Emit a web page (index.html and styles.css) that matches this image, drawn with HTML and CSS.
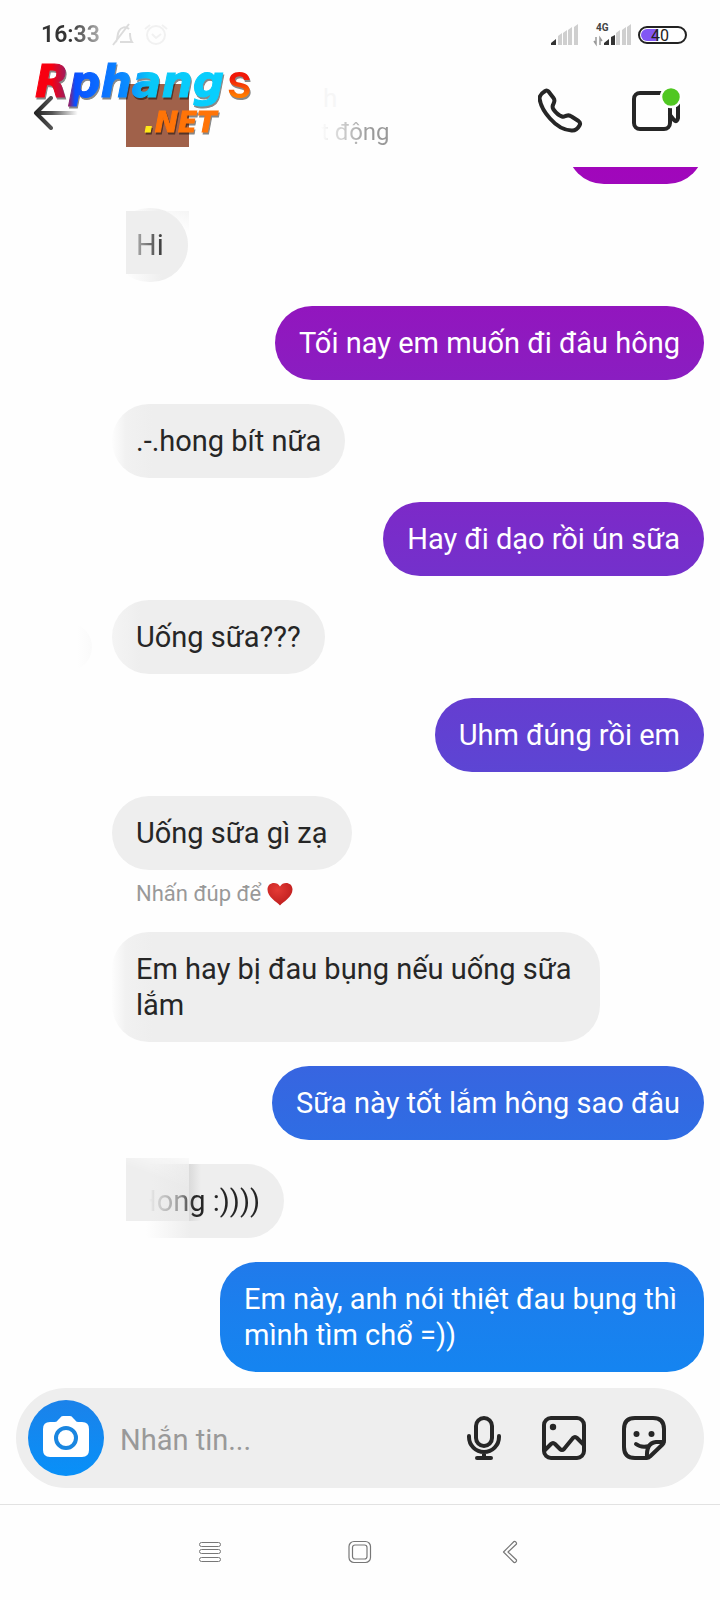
FILE: index.html
```html
<!DOCTYPE html>
<html lang="vi">
<head>
<meta charset="utf-8">
<meta name="viewport" content="width=device-width, initial-scale=1">
<title>Tin nhắn</title>
<link rel="stylesheet" href="styles.css">
</head>
<body>
<div class="app">
  <div class="status">
    <span class="clock">16:33</span>
    <svg class="status-left" width="60" height="24" viewBox="0 0 60 24" fill="none" stroke-width="2">
      <g stroke="#dcdcdc"><path d="M4 19c2-3 1-8 3-11 2-4 7-5 10-2M18 10c0 4 0 6 2 9H8M1 22L17 1"/></g>
      <g stroke="#f1f1f1"><circle cx="44" cy="12" r="9"/><path d="M33 6l5-4M50 2l5 4M40 11l4 4 5-4"/></g>
    </svg>
    <svg class="status-right" width="138" height="24" viewBox="0 0 138 24">
      <g fill="#cfcfcf"><path d="M8 13l4-3v12H8zM13 10l4-3v15h-4zM18 7l4-3v18h-4zM24 4l4-3v21h-4z"/><path d="M66 10l4-3v15h-4zM72 7l4-3v18h-4zM77 4l4-3v21h-4z"/></g>
      <path fill="#333" d="M1 22v-2l5-4v6zM54 22v-2l5-4v6zM61 14l4-2v10h-4z"/>
      <text class="net" x="46" y="8">4G</text>
      <path d="M46 14v7l-2-3M50 22v-7l2 3" fill="none" stroke="#999" stroke-width="1.500"/>
      <rect x="89" y="4" width="47" height="16" rx="8" fill="#fff" stroke="#222" stroke-width="2"/>
      <path d="M97 6h11v12H97a6 6 0 0 1 0-12z" fill="#8257f5"/>
      <text class="charge" x="101" y="18">40</text>
    </svg>
  </div>

  <header class="header">
    <button class="icon-btn back" aria-label="Quay lại">
      <svg width="46" height="34" viewBox="0 0 46 34" fill="none" stroke-width="4" stroke-linecap="round" stroke-linejoin="round">
        <defs><linearGradient id="fade" gradientUnits="userSpaceOnUse" x1="2" y1="0" x2="45" y2="0"><stop stop-color="#222"/><stop offset=".4" stop-color="#555"/><stop offset="1" stop-color="#fff"/></linearGradient></defs>
        <path stroke="url(#fade)" d="M18 2L3 17l15 15M3 17h40"/>
      </svg>
    </button>
    <div class="avatar"></div>
    <div class="peer"><span class="peer-name">h</span><span class="peer-state">t động</span></div>
    <button class="icon-btn" aria-label="Gọi thoại">
      <svg width="46" height="46" viewBox="0 0 46 46" fill="none" stroke="#262626" stroke-width="4" stroke-linejoin="round">
        <path d="M6.500 3.500Q8.500 1.500 10.500 3.500L15.500 10Q17 12 16 14.500L15 17Q14 19 15.500 21.500Q19.500 27 24 28.500Q25.500 29 27.500 28L29.500 27.500Q31.500 27 33.500 28.500L40.500 33Q43 35 41.500 37.500Q38.500 43 33.500 42.500Q22 42 12 30.500Q3 20.500 1.500 10.500Q1.500 6.500 6.500 3.500Z"/>
      </svg>
    </button>
    <button class="icon-btn" aria-label="Gọi video">
      <svg width="50" height="46" viewBox="0 0 50 46" fill="none" stroke="#262626" stroke-width="4" stroke-linejoin="round">
        <rect x="2" y="5" width="36" height="36" rx="6"/>
        <path d="M46 16v14q-1 5-4 2l-4-5" stroke-linecap="round"/>
        <circle cx="39" cy="9" r="10" fill="#50c722" stroke="#fff" stroke-width="2.500"/>
      </svg>
    </button>
    <svg class="watermark" width="230" height="104" viewBox="0 0 230 104">
      <defs>
        <linearGradient id="brand" gradientUnits="userSpaceOnUse" x1="0" y1="0" x2="196" y2="0"><stop offset=".1" stop-color="#f80010"/><stop offset=".19" stop-color="#8a2070"/><stop offset=".22" stop-color="#0a50ff"/><stop offset=".5" stop-color="#0a90ff"/><stop offset=".6" stop-color="#08c8f8"/><stop offset="1" stop-color="#08d0ff"/></linearGradient>
        <linearGradient id="warm" gradientUnits="userSpaceOnUse" x1="0" y1="32" x2="0" y2="60"><stop offset=".3" stop-color="#f01808"/><stop offset=".9" stop-color="#ff7a00"/></linearGradient>
      </defs>
      <text class="logo" x="3" y="59" fill="url(#brand)" stroke="url(#brand)">Rphang</text>
      <text class="logo-s" x="195" y="60" fill="url(#warm)">s</text>
      <text class="logo-net" x="112" y="94"><tspan fill="#ffe818" stroke="#ffe818">.</tspan>NET</text>
    </svg>
  </header>

  <main class="feed">
    <div class="msg sent sliver"></div>
    <div class="msg got patched hi"><span class="ink">Hi</span></div>
    <div class="msg sent">Tối nay em muốn đi đâu hông</div>
    <div class="msg got faded">.-.hong bít nữa</div>
    <div class="msg sent">Hay đi dạo rồi ún sữa</div>
    <div class="msg got soft ghost">Uống sữa???</div>
    <div class="msg sent">Uhm đúng rồi em</div>
    <div class="group">
      <div class="msg got">Uống sữa gì zạ</div>
      <div class="hint">Nhấn đúp để
        <svg width="26" height="24" viewBox="0 0 26 24"><defs><radialGradient id="heart" cx=".4" cy=".3" r=".7"><stop stop-color="#e43b35"/><stop offset="1" stop-color="#bf1e1e"/></radialGradient></defs><path fill="url(#heart)" d="M13 23.500C10 20 .5 15 .5 7.500.5 0 10-1 13 4.500 16-1 25.500 0 25.500 7.500 25.500 15 16 20 13 23.500z"/></svg>
      </div>
    </div>
    <div class="msg got faded wide-got">Em hay bị đau bụng nếu uống sữa lắm</div>
    <div class="msg sent">Sữa này tốt lắm hông sao đâu</div>
    <div class="msg got patched hong"><span class="ink">Hong :))))</span></div>
    <div class="msg sent wide-sent">Em này, anh nói thiệt đau bụng thì mình tìm chổ =))</div>
  </main>

  <form class="composer">
    <button type="button" class="camera" aria-label="Máy ảnh">
      <svg width="46" height="42" viewBox="0 0 46 42"><path fill="#fff" d="M7 7h5q2 0 3-2l2-2q1-2 3-2h7q2 0 3 2l2 2q1 2 3 2h4q7 0 7 7v21q0 7-7 7H7q-7 0-7-7V14q0-7 7-7z"/><circle cx="23" cy="23" r="10" fill="none" stroke="#1a86e0" stroke-width="4"/></svg>
    </button>
    <input class="field" type="text" placeholder="Nhắn tin..." aria-label="Nhắn tin">
    <button type="button" class="icon-btn" aria-label="Ghi âm">
      <svg width="44" height="44" viewBox="0 0 44 44" fill="none" stroke="#262626" stroke-width="4" stroke-linecap="round"><rect x="14" y="2" width="16" height="28" rx="8"/><path d="M7 20v1a15 15 0 0 0 30 0v-1M22 36v6M15 42h14"/></svg>
    </button>
    <button type="button" class="icon-btn" aria-label="Ảnh">
      <svg width="44" height="44" viewBox="0 0 44 44" fill="none" stroke="#262626" stroke-width="4" stroke-linejoin="round"><rect x="2" y="2" width="40" height="40" rx="7"/><path d="M2 35l7-7q2-2 4 0l5 5q2 2 4 0L31 22q2-2 4 0l7 7"/><circle cx="11" cy="11" r="3.200" fill="#262626" stroke="none"/></svg>
    </button>
    <button type="button" class="icon-btn" aria-label="Nhãn dán">
      <svg width="44" height="44" viewBox="0 0 44 44" fill="none" stroke="#262626" stroke-width="4" stroke-linejoin="round" stroke-linecap="round"><path d="M25 42H13Q2 42 2 31V13Q2 2 13 2h18q11 0 11 11v12q0 2-1.500 3.500L28 40.500Q27 42 25 42q-1-15 9-16h8M14 28q5 4 13 2"/><g fill="#262626" stroke="none"><circle cx="14.500" cy="18" r="3"/><circle cx="29.500" cy="18" r="3"/></g></svg>
    </button>
  </form>

  <nav class="nav">
    <button class="icon-btn" aria-label="Gần đây"><svg width="24" height="24" viewBox="0 0 24 24" fill="none" stroke="#777"><rect x="1.500" y="2.500" width="21" height="4" rx="2"/><rect x="1.500" y="9.500" width="21" height="4" rx="2"/><rect x="1.500" y="17.500" width="21" height="4" rx="2"/></svg></button>
    <button class="icon-btn" aria-label="Trang chủ"><svg width="24" height="24" viewBox="0 0 24 24" fill="none" stroke="#777" stroke-width="1.200"><rect x="1" y="1.500" width="21.500" height="21" rx="5"/><rect x="4.500" y="5" width="14.500" height="14" rx="2.500"/></svg></button>
    <button class="icon-btn" aria-label="Trở về"><svg width="24" height="24" viewBox="0 0 24 24" fill="none" stroke="#777" stroke-width="1.200" stroke-linejoin="round"><path d="M5.500 12L16 1.500q1.500-.5 2.500 1.500v1L10 12l8.500 8v1q-1 2-2.500 1.500z"/></svg></button>
  </nav>
</div>
</body>
</html>
```

FILE: styles.css
```css
* {
  box-sizing: border-box;
}

body {
  margin: 0;
  background: #fefefe;
  color: #262626;
  font-family: Roboto, "Noto Sans", sans-serif;
  font-size: 29px;
  line-height: 36px;
}

button {
  border: 0;
  padding: 0;
  background: none;
  display: block;
}

svg {
  display: block;
}

.app {
  display: flex;
  flex-direction: column;
  height: 100vh;
}

/* Status bar */
.status {
  display: flex;
  align-items: center;
  height: 70px;
  padding: 0 32px 0 41px;
  flex: none;
}

.clock {
  font-size: 23px;
  font-weight: 600;
  background: linear-gradient(90deg, #333 50%, #b0b0b0);
  background-clip: text;
  -webkit-background-clip: text;
  color: transparent;
}

.status-left {
  margin-left: 12px;
}

.status-right {
  margin-left: auto;
}

.net {
  font-size: 10px;
  font-weight: 700;
  fill: #444;
}

.charge {
  font-size: 16px;
  fill: #222;
}

/* Conversation header */
.header {
  position: relative;
  display: flex;
  align-items: center;
  height: 97px;
  padding: 0 38px 16px 33px;
  flex: none;
}

.avatar {
  width: 63px;
  height: 63px;
  margin: 10px 0 0 47px;
  background: #a0614a;
}

.back {
  margin-top: 4px;
}

.peer {
  display: flex;
  flex-direction: column;
  flex: 1;
  padding: 8px 0 0 132px;
  line-height: 34px;
}

.peer-name {
  padding-left: 2px;
  font-size: 26px;
  color: #f6f6f6;
}

.peer-state {
  align-self: flex-start;
  font-size: 24px;
  background: linear-gradient(90deg, #fefefe, #d0d0d0 30%, #999 70%);
  background-clip: text;
  -webkit-background-clip: text;
  color: transparent;
}

.header .icon-btn + .icon-btn {
  margin-left: 48px;
}

.watermark {
  position: absolute;
  left: 32px;
  top: -32px;
  overflow: visible;
  filter: drop-shadow(1px 2px 0 #00000077);
  pointer-events: none;
}

.logo {
  font: italic bold 44px "DejaVu Sans", sans-serif;
  stroke-width: 1px;
}

.logo-s {
  font: 500 48px Roboto, sans-serif;
}

.logo-net {
  font: italic bold 28px "DejaVu Sans", sans-serif;
  fill: #ff7408;
  stroke: #ff7408;
  stroke-width: 1px;
}

/* Messages */
.feed {
  display: flex;
  flex-direction: column;
  justify-content: flex-end;
  gap: 24px;
  flex: 1;
  min-height: 0;
  padding: 0 16px 0 112px;
  overflow: hidden;
}

.feed > * {
  flex: none;
}

.msg {
  position: relative;
  width: fit-content;
  padding: 19px 24px;
  border-radius: 37px;
}

.got {
  background: #eee;
}

.sent {
  align-self: flex-end;
  color: #fff;
  background: linear-gradient(#a106bb 167px, #8e1abf 343px, #782dca 539px, #6141d2 735px, #3369e2 1103px, #1a80ee 1317px, #0a8df5 1480px) fixed;
}

.sliver {
  width: 137px;
  height: 74px;
}

.wide-got {
  max-width: 488px;
}

.wide-sent {
  max-width: 484px;
}

.soft {
  background: linear-gradient(90deg, #f4f4f4, #eee 28px);
}

.faded {
  background: linear-gradient(90deg, #fdfdfd, #f1f1f1 14px, #eee 40px);
}

.patched {
  isolation: isolate;
}

.patched::before {
  content: "";
  position: absolute;
  z-index: -1;
  left: 14px;
  width: 63px;
  height: 63px;
}

.hi {
  background: linear-gradient(90deg, transparent 14px, #eee 50px);
}

.hi::before {
  top: 3px;
  background:
    radial-gradient(circle 37px at 25px 34px, #eee 36px, transparent 37px),
    linear-gradient(90deg, #eee 40px, transparent 40px),
    linear-gradient(200deg, #f5f5f5, transparent 20px);
}

.hong {
  background: linear-gradient(90deg, transparent 34px, #eee 78px);
}

.hong::before {
  top: -6px;
  background: linear-gradient(90deg, #eee 40%, #e9e9e9);
  mask-image: linear-gradient(200deg, #0003, #000 35%);
}

.hong::after {
  content: "";
  position: absolute;
  z-index: -1;
  left: 77px;
  top: 0;
  width: 12px;
  height: 57px;
  background: linear-gradient(90deg, #dadada, #eee);
}

.ink {
  background-clip: text;
  -webkit-background-clip: text;
  color: transparent;
}

.hi .ink {
  background-image: linear-gradient(90deg, #aaa, #333);
}

.hong .ink {
  background-image: linear-gradient(90deg, #eee 13px, #ddd 18px, #999 44px, #262626 58px);
}

.ghost::before {
  content: "";
  position: absolute;
  left: -68px;
  top: 23px;
  width: 48px;
  height: 48px;
  border-radius: 50%;
  background: linear-gradient(90deg, transparent 70%, #fafafa);
}

.hint {
  display: flex;
  align-items: center;
  gap: 6px;
  padding: 10px 0 0 24px;
  font-size: 22px;
  line-height: 28px;
  color: #999;
}

/* Composer */
.composer {
  display: flex;
  align-items: center;
  gap: 36px;
  height: 100px;
  margin: 16px;
  padding: 0 38px 0 12px;
  border-radius: 50px;
  background: #eee;
  flex: none;
}

.camera {
  display: grid;
  place-items: center;
  width: 76px;
  height: 76px;
  border-radius: 50%;
  background: linear-gradient(#1b82ea, #0890f8);
  flex: none;
}

.camera svg {
  margin-bottom: 4px;
}

.field {
  flex: 1;
  min-width: 0;
  margin-left: -20px;
  padding: 4px 0 0;
  border: 0;
  outline: 0;
  background: none;
  font: inherit;
  color: inherit;
}

.field::placeholder {
  color: #999;
  opacity: 1;
}

/* System navigation */
.nav {
  display: grid;
  grid-template-columns: repeat(3, 150px);
  justify-content: center;
  place-items: center;
  height: 96px;
  padding-bottom: 2px;
  border-top: 1px solid #e2e2e2;
  flex: none;
}
```
